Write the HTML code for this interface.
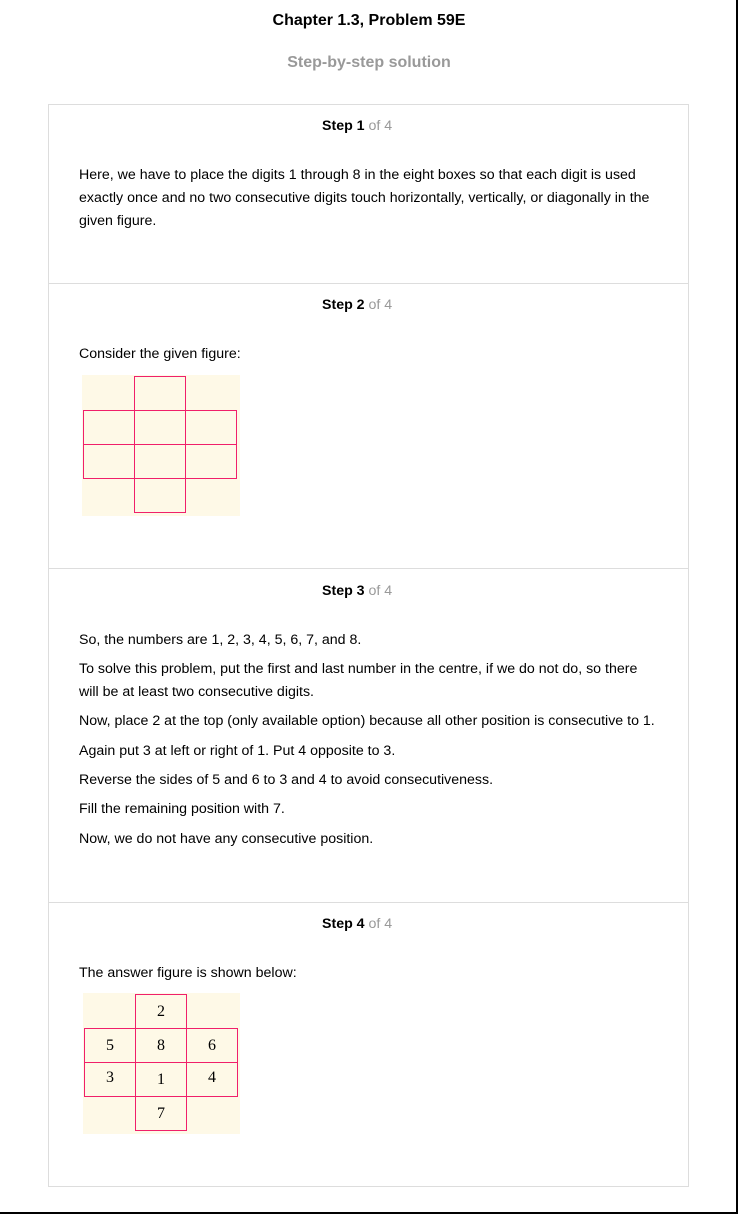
<!DOCTYPE html>
<html><head><meta charset="utf-8"><style>
*{margin:0;padding:0;box-sizing:border-box}
html,body{width:738px;height:1214px;background:#fff;overflow:hidden}
body{position:relative;font-family:"Liberation Sans",Arial,sans-serif;color:#000}
.frame{position:absolute;left:0;top:0;width:738px;height:1214px;border-right:2px solid #000;border-bottom:2px solid #000}
.abs{position:absolute;white-space:nowrap}
.t{font-size:14.2px;line-height:23px}
.h{font-size:14.2px;font-weight:bold;left:322px}
.h span{font-weight:normal;color:#999}
.box{position:absolute;left:48px;top:104px;width:641px;height:1083px;border:1px solid #ddd}
.sep{position:absolute;left:49px;width:639px;height:1px;background:#ddd}
.fig{position:absolute;background:#fef9e7}
.c{position:absolute;width:52px;height:35px;border:1px solid #f0206a;font-family:"Liberation Serif",serif;font-size:16px;text-align:center;line-height:34px}
</style></head><body>
<div class="frame"></div>
<div class="abs" style="left:0;width:738px;text-align:center;top:12px;font-size:16px;font-weight:bold">Chapter 1.3, Problem 59E</div>
<div class="abs" style="left:0;width:738px;text-align:center;top:54px;font-size:16px;font-weight:bold;color:#999">Step-by-step solution</div>
<div class="box"></div>
<div class="sep" style="top:283px"></div>
<div class="sep" style="top:568px"></div>
<div class="sep" style="top:902px"></div>

<div class="abs h" style="top:118px">Step 1 <span>of 4</span></div>
<div class="abs t" style="left:79px;top:164px;white-space:normal;width:590px">Here, we have to place the digits 1 through 8 in the eight boxes so that each digit is used exactly once and no two consecutive digits touch horizontally, vertically, or diagonally in the given figure.</div>

<div class="abs h" style="top:297px">Step 2 <span>of 4</span></div>
<div class="abs t" style="left:79px;top:343px">Consider the given figure:</div>
<div class="fig" style="left:82px;top:375px;width:158px;height:141px"></div>
<div class="c" style="left:134px;top:376px"></div>
<div class="c" style="left:83px;top:410px"></div>
<div class="c" style="left:134px;top:410px"></div>
<div class="c" style="left:185px;top:410px"></div>
<div class="c" style="left:83px;top:444px"></div>
<div class="c" style="left:134px;top:444px"></div>
<div class="c" style="left:185px;top:444px"></div>
<div class="c" style="left:134px;top:478px"></div>

<div class="abs h" style="top:583px">Step 3 <span>of 4</span></div>
<div class="abs t" style="left:79px;top:629px">So, the numbers are 1, 2, 3, 4, 5, 6, 7, and 8.</div>
<div class="abs t" style="left:79px;top:658px">To solve this problem, put the first and last number in the centre, if we do not do, so there</div>
<div class="abs t" style="left:79px;top:681px">will be at least two consecutive digits.</div>
<div class="abs t" style="left:79px;top:710px">Now, place 2 at the top (only available option) because all other position is consecutive to 1.</div>
<div class="abs t" style="left:79px;top:740px">Again put 3 at left or right of 1. Put 4 opposite to 3.</div>
<div class="abs t" style="left:79px;top:769px">Reverse the sides of 5 and 6 to 3 and 4 to avoid consecutiveness.</div>
<div class="abs t" style="left:79px;top:798px">Fill the remaining position with 7.</div>
<div class="abs t" style="left:79px;top:828px">Now, we do not have any consecutive position.</div>

<div class="abs h" style="top:916px">Step 4 <span>of 4</span></div>
<div class="abs t" style="left:79px;top:962px">The answer figure is shown below:</div>
<div class="fig" style="left:83px;top:993px;width:157px;height:141px"></div>
<div class="c" style="left:135px;top:994px">2</div>
<div class="c" style="left:84px;top:1028px">5</div>
<div class="c" style="left:135px;top:1028px">8</div>
<div class="c" style="left:186px;top:1028px">6</div>
<div class="c" style="left:84px;top:1062px;line-height:30px">3</div>
<div class="c" style="left:135px;top:1062px">1</div>
<div class="c" style="left:186px;top:1062px;line-height:30px">4</div>
<div class="c" style="left:135px;top:1096px">7</div>
</body></html>
